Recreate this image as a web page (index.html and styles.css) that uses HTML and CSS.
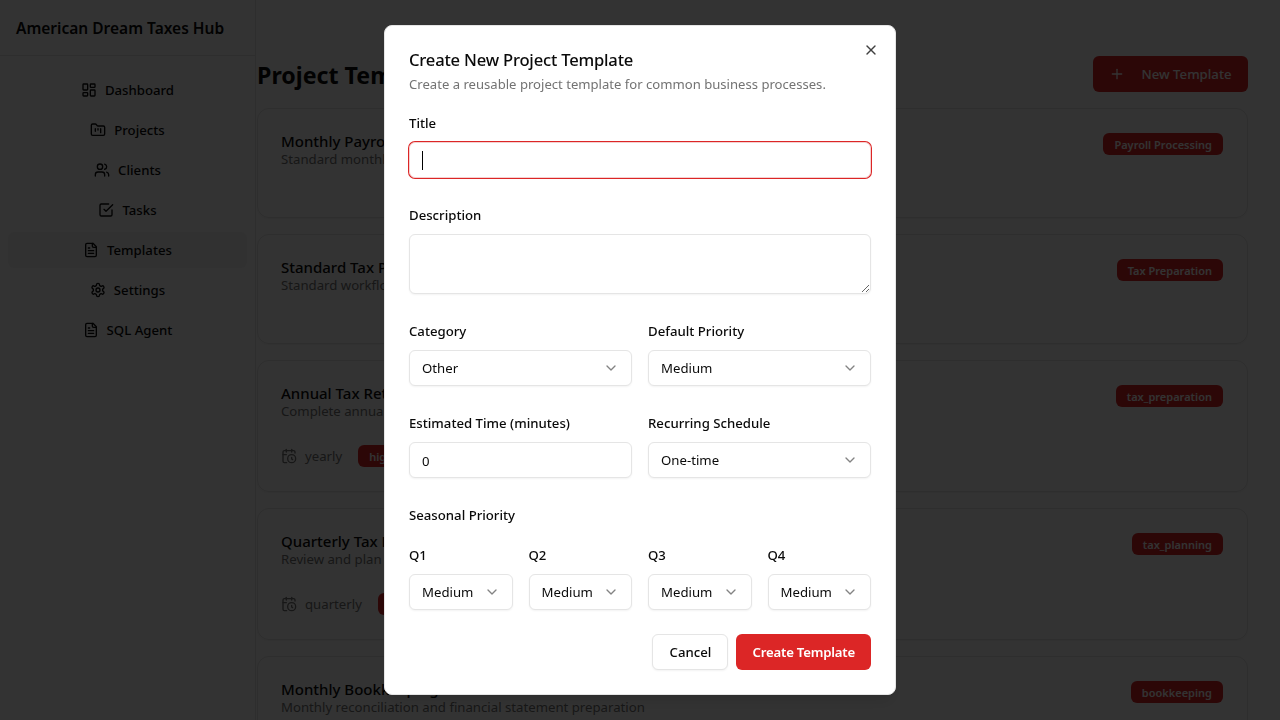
FILE: index.html
```html
<!DOCTYPE html>
<html lang="en">
<head>
<meta charset="utf-8">
<title>Project Templates</title>
<link rel="stylesheet" href="styles.css">
</head>
<body>
<svg class="defs" aria-hidden="true">
  <symbol id="i-dash" viewBox="0 0 24 24"><rect x="3" y="3" width="7" height="9" rx="1"/><rect x="14" y="3" width="7" height="5" rx="1"/><rect x="14" y="12" width="7" height="9" rx="1"/><rect x="3" y="16" width="7" height="5" rx="1"/></symbol>
  <symbol id="i-folder" viewBox="0 0 24 24"><path d="M4 20h16a2 2 0 0 0 2-2V8a2 2 0 0 0-2-2h-7.93a2 2 0 0 1-1.66-.9l-.82-1.2A2 2 0 0 0 7.93 3H4a2 2 0 0 0-2 2v13c0 1.1.9 2 2 2Z"/><path d="M8 10v4"/><path d="M12 10v2"/><path d="M16 10v6"/></symbol>
  <symbol id="i-users" viewBox="0 0 24 24"><path d="M16 21v-2a4 4 0 0 0-4-4H6a4 4 0 0 0-4 4v2"/><circle cx="9" cy="7" r="4"/><path d="M22 21v-2a4 4 0 0 0-3-3.87"/><path d="M16 3.13a4 4 0 0 1 0 7.75"/></symbol>
  <symbol id="i-check" viewBox="0 0 24 24"><path d="m9 11 3 3L22 4"/><path d="M21 12v7a2 2 0 0 1-2 2H5a2 2 0 0 1-2-2V5a2 2 0 0 1 2-2h11"/></symbol>
  <symbol id="i-file" viewBox="0 0 24 24"><path d="M15 2H6a2 2 0 0 0-2 2v16a2 2 0 0 0 2 2h12a2 2 0 0 0 2-2V7Z"/><path d="M14 2v4a2 2 0 0 0 2 2h4"/><path d="M10 9H8"/><path d="M16 13H8"/><path d="M16 17H8"/></symbol>
  <symbol id="i-gear" viewBox="0 0 24 24"><path d="M12.22 2h-.44a2 2 0 0 0-2 2v.18a2 2 0 0 1-1 1.73l-.43.25a2 2 0 0 1-2 0l-.15-.08a2 2 0 0 0-2.73.73l-.22.38a2 2 0 0 0 .73 2.73l.15.1a2 2 0 0 1 1 1.72v.51a2 2 0 0 1-1 1.74l-.15.09a2 2 0 0 0-.73 2.73l.22.38a2 2 0 0 0 2.73.73l.15-.08a2 2 0 0 1 2 0l.43.25a2 2 0 0 1 1 1.73V20a2 2 0 0 0 2 2h.44a2 2 0 0 0 2-2v-.18a2 2 0 0 1 1-1.73l.43-.25a2 2 0 0 1 2 0l.15.08a2 2 0 0 0 2.73-.73l.22-.39a2 2 0 0 0-.73-2.73l-.15-.08a2 2 0 0 1-1-1.74v-.5a2 2 0 0 1 1-1.74l.15-.09a2 2 0 0 0 .73-2.73l-.22-.38a2 2 0 0 0-2.73-.73l-.15.08a2 2 0 0 1-2 0l-.43-.25a2 2 0 0 1-1-1.73V4a2 2 0 0 0-2-2z"/><circle cx="12" cy="12" r="3"/></symbol>
  <symbol id="i-cal" viewBox="0 0 24 24"><path d="M21 7.5V6a2 2 0 0 0-2-2H5a2 2 0 0 0-2 2v14a2 2 0 0 0 2 2h3.5"/><path d="M16 2v4"/><path d="M8 2v4"/><path d="M3 10h5"/><path d="M17.5 17.5 16 16.3V14"/><circle cx="16" cy="16" r="6"/></symbol>
  <symbol id="i-plus" viewBox="0 0 24 24"><path d="M5 12h14"/><path d="M12 5v14"/></symbol>
  <symbol id="i-x" viewBox="0 0 24 24"><path d="M18 6 6 18"/><path d="m6 6 12 12"/></symbol>
  <symbol id="i-down" viewBox="0 0 24 24"><path d="m6 9 6 6 6-6"/></symbol>
</svg>

<div class="app">
  <aside class="sidebar">
    <div class="brand">American Dream Taxes Hub</div>
    <nav class="nav">
      <a class="nav-item"><svg class="icon"><use href="#i-dash"/></svg>Dashboard</a>
      <a class="nav-item"><svg class="icon"><use href="#i-folder"/></svg>Projects</a>
      <a class="nav-item"><svg class="icon"><use href="#i-users"/></svg>Clients</a>
      <a class="nav-item"><svg class="icon"><use href="#i-check"/></svg>Tasks</a>
      <a class="nav-item active"><svg class="icon"><use href="#i-file"/></svg>Templates</a>
      <a class="nav-item"><svg class="icon"><use href="#i-gear"/></svg>Settings</a>
      <a class="nav-item"><svg class="icon"><use href="#i-file"/></svg>SQL Agent</a>
    </nav>
  </aside>

  <main class="main">
    <header class="page-head">
      <h1 class="page-title">Project Templates</h1>
      <button class="new-btn"><svg class="icon"><use href="#i-plus"/></svg>New Template</button>
    </header>
    <section class="cards">
      <article class="card">
        <div class="card-top">
          <div><h2 class="card-title">Monthly Payroll</h2><p class="card-desc">Standard monthly</p></div>
          <span class="badge">Payroll Processing</span>
        </div>
      </article>
      <article class="card">
        <div class="card-top">
          <div><h2 class="card-title">Standard Tax Prep</h2><p class="card-desc">Standard workflow</p></div>
          <span class="badge">Tax Preparation</span>
        </div>
      </article>
      <article class="card">
        <div class="card-top">
          <div><h2 class="card-title">Annual Tax Return</h2><p class="card-desc">Complete annual</p></div>
          <span class="badge">tax_preparation</span>
        </div>
        <div class="card-foot"><svg class="icon"><use href="#i-cal"/></svg><span class="freq">yearly</span><span class="badge">high</span></div>
      </article>
      <article class="card">
        <div class="card-top">
          <div><h2 class="card-title">Quarterly Tax Plan</h2><p class="card-desc">Review and plan</p></div>
          <span class="badge">tax_planning</span>
        </div>
        <div class="card-foot"><svg class="icon"><use href="#i-cal"/></svg><span class="freq">quarterly</span><span class="badge">high</span></div>
      </article>
      <article class="card">
        <div class="card-top">
          <div><h2 class="card-title">Monthly Bookkeeping</h2><p class="card-desc">Monthly reconciliation and financial statement preparation</p></div>
          <span class="badge">bookkeeping</span>
        </div>
      </article>
    </section>
  </main>
</div>

<div class="overlay"></div>

<div class="modal" role="dialog" aria-labelledby="m-title">
  <button class="close" aria-label="Close"><svg class="icon"><use href="#i-x"/></svg></button>
  <h2 class="modal-title" id="m-title">Create New Project Template</h2>
  <p class="modal-desc">Create a reusable project template for common business processes.</p>
  <form class="form">
    <div class="field">
      <label class="label">Title</label>
      <div class="input-wrap"><input class="input focus" type="text"><span class="caret"></span></div>
    </div>
    <div class="field">
      <label class="label">Description</label>
      <textarea class="input area"></textarea>
    </div>
    <div class="two">
      <div class="field">
        <label class="label">Category</label>
        <button type="button" class="select"><span>Other</span><svg class="icon chev"><use href="#i-down"/></svg></button>
      </div>
      <div class="field">
        <label class="label">Default Priority</label>
        <button type="button" class="select"><span>Medium</span><svg class="icon chev"><use href="#i-down"/></svg></button>
      </div>
    </div>
    <div class="two">
      <div class="field">
        <label class="label">Estimated Time (minutes)</label>
        <input class="input number" type="text" value="0">
      </div>
      <div class="field">
        <label class="label">Recurring Schedule</label>
        <button type="button" class="select"><span>One-time</span><svg class="icon chev"><use href="#i-down"/></svg></button>
      </div>
    </div>
    <div class="seasonal">
      <div class="label">Seasonal Priority</div>
      <div class="four">
        <div class="field"><label class="label">Q1</label><button type="button" class="select"><span>Medium</span><svg class="icon chev"><use href="#i-down"/></svg></button></div>
        <div class="field"><label class="label">Q2</label><button type="button" class="select"><span>Medium</span><svg class="icon chev"><use href="#i-down"/></svg></button></div>
        <div class="field"><label class="label">Q3</label><button type="button" class="select"><span>Medium</span><svg class="icon chev"><use href="#i-down"/></svg></button></div>
        <div class="field"><label class="label">Q4</label><button type="button" class="select"><span>Medium</span><svg class="icon chev"><use href="#i-down"/></svg></button></div>
      </div>
    </div>
    <div class="actions">
      <button type="button" class="btn ghost">Cancel</button>
      <button type="button" class="btn primary">Create Template</button>
    </div>
  </form>
</div>
</body>
</html>
```
FILE: styles.css
```css
* { box-sizing: border-box; }
html, body { margin: 0; height: 100%; overflow: hidden; }
body {
  font-family: "Noto Sans", "Open Sans", sans-serif;
  font-size: 13.2px;
  color: #0a0a0a;
  background: #fff;
}
button, input, textarea { font-family: inherit; font-size: 13.2px; }
.defs { display: none; }
.icon {
  width: 16px; height: 16px; flex: none;
  fill: none; stroke: currentColor; stroke-width: 2;
  stroke-linecap: round; stroke-linejoin: round;
}
.app { display: flex; height: 720px; overflow: hidden; }
.sidebar { width: 256px; flex: none; border-right: 1px solid #e5e5e5; }
.brand {
  height: 56px; display: flex; align-items: center; padding-left: 16px;
  border-bottom: 1px solid #e5e5e5;
  font-size: 15.5px; font-weight: 600;
}
.nav { display: flex; flex-direction: column; gap: 4px; padding: 16px 8px; }
.nav-item {
  height: 36px; display: flex; align-items: center; justify-content: center; gap: 8px;
  border-radius: 6px; font-weight: 500;
}
.nav-item.active { background: #f5f5f5; }

.main { flex: 1; min-width: 0; padding: 56px 32px 0 1px; }
.page-head { display: flex; align-items: flex-start; justify-content: space-between; height: 36px; margin-bottom: 16px; }
.page-title { margin: 0; padding-top: 1px; font-size: 23.2px; font-weight: 700; line-height: 36px; }
.new-btn {
  height: 36px; width: 155px; display: flex; align-items: center; justify-content: center; gap: 16px;
  background: #dc2626; color: #fff; border: 0; border-radius: 6px;
  font-weight: 500;
}
.cards { display: flex; flex-direction: column; gap: 16px; }
.card {
  border: 1px solid #e5e5e5; border-radius: 12px; padding: 24px 24px 24px 23px; min-height: 110px;
  box-shadow: 0 1px 2px rgba(0,0,0,.05);
}
.card-top { display: flex; justify-content: space-between; align-items: flex-start; height: 36px; margin-bottom: 24px; }
.card-title { margin: -1px 0 0; font-size: 15px; font-weight: 500; line-height: 18px; }
.card-desc { margin: 0; line-height: 18px; color: #737373; }
.card-foot { display: flex; align-items: center; height: 22px; color: #737373; }
.freq { margin: 0 16px 0 8px; }
.badge {
  display: inline-flex; align-items: center; height: 22px; padding: 0 11px;
  background: #dc2626; color: #fff; border-radius: 6px;
  font-size: 11px; font-weight: 600;
}

.overlay { position: fixed; inset: 0; background: rgba(0,0,0,.8); }
.modal {
  position: fixed; left: 384px; top: 25px; width: 512px; height: 670px;
  background: #fff; border: 1px solid #e5e5e5; border-radius: 8px;
  padding: 24px 24px 0;
  box-shadow: 0 10px 15px -3px rgba(0,0,0,.1), 0 4px 6px -4px rgba(0,0,0,.1);
}
.close {
  position: absolute; right: 16px; top: 16px; width: 16px; height: 16px; padding: 0;
  background: none; border: 0; color: #404040; display: flex;
}
.modal-title { margin: 0; font-size: 16.6px; letter-spacing: -.2px; font-weight: 500; line-height: 20px; }
.modal-desc { margin: 4px 0 0; font-size: 13.1px; line-height: 20px; color: #737373; }
.form { display: flex; flex-direction: column; gap: 28px; margin-top: 20px; }
.field { display: flex; flex-direction: column; gap: 8px; min-width: 0; }
.label { font-weight: 500; line-height: 18px; padding-bottom: 2px; display: block; }
.input-wrap { position: relative; display: flex; }
.input {
  width: 100%; height: 36px; padding: 0 12px;
  border: 1px solid #e5e5e5; border-radius: 6px; background: #fff;
  box-shadow: 0 1px 2px rgba(0,0,0,.05);
  color: #0a0a0a; outline: none;
}
.input.focus { border-color: #f5d0d0; box-shadow: 0 0 0 1px #dc2626; caret-color: transparent; }
.input.number { padding-top: 2px; }
.caret { position: absolute; left: 13px; top: 9px; width: 1px; height: 19px; background: #000; }
.area { height: 60px; padding: 8px 12px; display: block; resize: vertical; }
.two { display: grid; grid-template-columns: 1fr 1fr; gap: 16px; }
.four { display: grid; grid-template-columns: repeat(4, 1fr); gap: 16px; }
.seasonal { display: flex; flex-direction: column; gap: 20px; }
.select {
  width: 100%; height: 36px; padding: 0 12px;
  display: flex; align-items: center; justify-content: space-between;
  border: 1px solid #e5e5e5; border-radius: 6px; background: #fff;
  box-shadow: 0 1px 2px rgba(0,0,0,.05);
  color: #0a0a0a;
}
.chev { opacity: .5; }
.actions { display: flex; justify-content: flex-end; gap: 8px; margin-top: -4px; }
.btn { height: 36px; padding: 0 16px; border-radius: 6px; font-weight: 500; }
.ghost { min-width: 76px; background: #fff; border: 1px solid #e5e5e5; color: #0a0a0a; box-shadow: 0 1px 2px rgba(0,0,0,.05); }
.primary { background: #dc2626; border: 0; color: #fff; font-weight: 600; letter-spacing: -.2px; }
```
